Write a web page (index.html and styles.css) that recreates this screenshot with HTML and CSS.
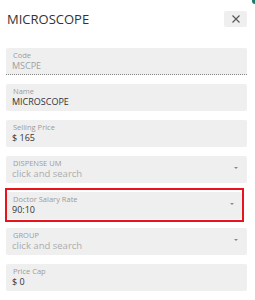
FILE: index.html
```html
<!DOCTYPE html>
<html>
<head>
<meta charset="utf-8">
<link rel="stylesheet" href="styles.css">
</head>
<body>
<div class="corner"></div>
<div class="dialog">
  <div class="header">
    <div class="title">MICROSCOPE</div>
    <div class="close"><svg width="8" height="8" viewBox="0 0 8 8"><path d="M0.5 0.5L7.5 7.5M7.5 0.5L0.5 7.5" stroke="#555" stroke-width="1.1" fill="none"/></svg></div>
  </div>
  <div class="form">
    <div class="field disabled">
      <div class="label">Code</div>
      <div class="value muted">MSCPE</div>
    </div>
    <div class="field">
      <div class="label">Name</div>
      <div class="value">MICROSCOPE</div>
    </div>
    <div class="field">
      <div class="label">Selling Price</div>
      <div class="value">$ 165</div>
    </div>
    <div class="field select">
      <div class="label">DISPENSE UM</div>
      <div class="value placeholder">click and search</div>
      <span class="caret"></span>
    </div>
    <div class="highlight">
      <div class="field select">
        <div class="label">Doctor Salary Rate</div>
        <div class="value">90:10</div>
        <span class="caret"></span>
      </div>
    </div>
    <div class="field select">
      <div class="label">GROUP</div>
      <div class="value placeholder">click and search</div>
      <span class="caret"></span>
    </div>
    <div class="field">
      <div class="label">Price Cap</div>
      <div class="value">$ 0</div>
    </div>
  </div>
</div>
</body>
</html>
```
FILE: styles.css
```css
html, body {
  margin: 0;
  padding: 0;
  background: #ffffff;
}
body {
  font-family: "Open Sans", "Liberation Sans", sans-serif;
  color: #333333;
  position: relative;
  width: 255px;
  height: 300px;
  overflow: hidden;
}
.corner {
  position: absolute;
  right: 0;
  top: 0;
  width: 3px;
  height: 4px;
  background: #1d7a68;
  border-bottom-left-radius: 3px;
}
.dialog {
  padding: 0 8px 0 6px;
}
.header {
  display: flex;
  justify-content: space-between;
  align-items: center;
  height: 38px;
  margin-bottom: 10px;
}
.title {
  font-size: 13px;
  line-height: 16px;
  padding-left: 1px;
  color: #333;
}
.close {
  width: 23px;
  height: 16px;
  background: #efefef;
  border-radius: 2px;
  display: flex;
  align-items: center;
  justify-content: center;
}
.close svg {
  display: block;
}
.form {
  display: flex;
  flex-direction: column;
  gap: 9px;
}
.field {
  position: relative;
  height: 27px;
  box-sizing: border-box;
  background: #efefef;
  border-radius: 2px;
  padding: 2px 6px 0 6px;
}
.field.disabled {
  border-bottom: 1px dotted #8a8a8a;
  border-radius: 2px 2px 0 0;
}
.label {
  font-size: 7.5px;
  line-height: 10px;
  color: #9c9c9c;
  padding-left: 1px;
}
.value {
  font-size: 9px;
  line-height: 12px;
  color: #333;
}
.value.muted {
  color: #a0a0a0;
}
.value.placeholder {
  color: #acacac;
  font-size: 9.5px;
}
.caret {
  position: absolute;
  right: 9px;
  top: 11px;
  width: 0;
  height: 0;
  border-left: 2.5px solid transparent;
  border-right: 2.5px solid transparent;
  border-top: 2.5px solid #888;
}
.highlight {
  border: 2px solid #e8141c;
  margin: -4px 3px -3px -1px;
  padding: 2px 0 1px 0;
}
.highlight .field {
  padding-left: 5px;
}
.highlight .caret {
  right: 8px;
}
```
